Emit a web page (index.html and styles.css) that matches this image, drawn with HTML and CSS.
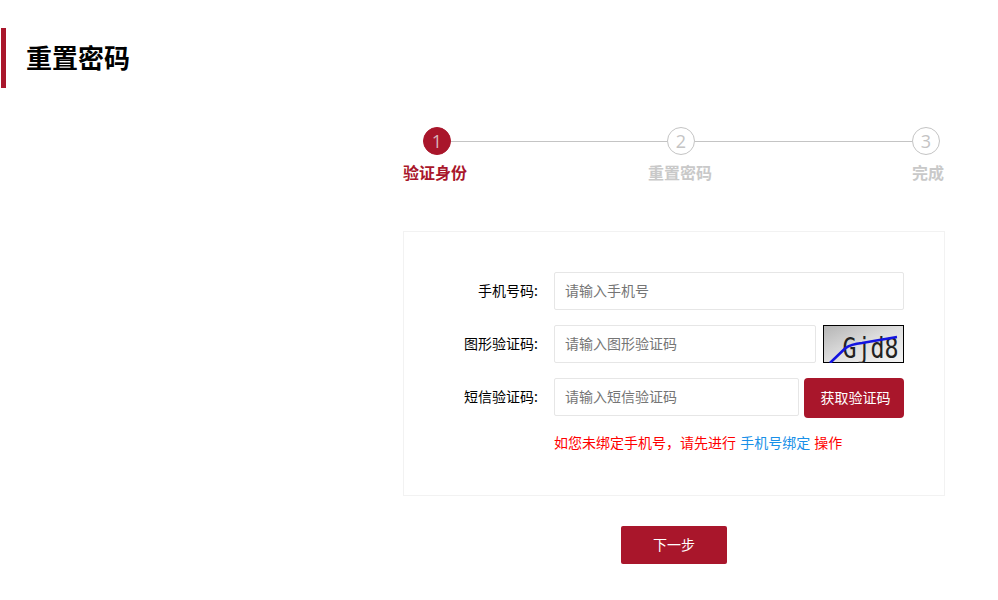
FILE: index.html
```html
<!DOCTYPE html>
<html lang="zh-CN">
<head>
<meta charset="utf-8">
<title>重置密码</title>
<link rel="stylesheet" href="styles.css">
</head>
<body>
<h1 class="page-title">重置密码</h1>
<main class="panel">
  <div class="steps">
    <span class="dot dot-active">1</span>
    <span class="line"></span>
    <span class="dot">2</span>
    <span class="line line-long"></span>
    <span class="dot">3</span>
  </div>
  <div class="step-labels">
    <span class="label-active">验证身份</span>
    <span class="label-mid">重置密码</span>
    <span class="label-end">完成</span>
  </div>
  <form class="card">
    <div class="row">
      <label class="field-label">手机号码:</label>
      <input class="field" placeholder="请输入手机号">
    </div>
    <div class="row">
      <label class="field-label">图形验证码:</label>
      <input class="field" placeholder="请输入图形验证码">
      <svg class="captcha" width="81" height="38" viewBox="0 0 81 38">
        <defs>
          <linearGradient id="cap" x1="0" y1="0" x2="1" y2="1">
            <stop offset="0" stop-color="#b4b4b4"/>
            <stop offset="0.5" stop-color="#dedede"/>
            <stop offset="1" stop-color="#f4f4f4"/>
          </linearGradient>
        </defs>
        <rect x="0.5" y="0.5" width="80" height="37" fill="url(#cap)" stroke="#000"/>
        <text class="captcha-text" x="19.5" y="33" textLength="56" lengthAdjust="spacingAndGlyphs">Gjd8</text>
        <path d="M7 38 L22 23.5 Q28 19 39 18 L74 12" fill="none" stroke="#1414e0" stroke-width="2.6"/>
      </svg>
    </div>
    <div class="row">
      <label class="field-label">短信验证码:</label>
      <input class="field" placeholder="请输入短信验证码">
      <button type="button" class="sms-btn">获取验证码</button>
    </div>
    <p class="hint">如您未绑定手机号，请先进行 <a class="hint-link">手机号绑定</a> 操作</p>
  </form>
  <div class="actions">
    <button type="button" class="next-btn">下一步</button>
  </div>
</main>
</body>
</html>
```
FILE: styles.css
```css
* { box-sizing: border-box; }
html, body { margin: 0; padding: 0; background: #fff; }
body {
  font-family: "Noto Sans CJK SC", "Liberation Sans", sans-serif;
  font-size: 14px;
  color: #000;
  height: 600px;
  overflow: hidden;
}
.page-title {
  margin: 28px 0 0 1px;
  height: 60px;
  border-left: 5px solid #a9162b;
  padding-left: 20px;
  font-size: 26px;
  font-weight: 700;
  line-height: 58px;
}
.panel {
  width: 542px;
  margin: 40px 0 0 403px;
}
.steps {
  display: flex;
  align-items: center;
  margin-top: -1px;
  padding-left: 20px;
}
.dot {
  flex: none;
  width: 28px;
  height: 28px;
  border: 1px solid #c4c4c4;
  border-radius: 50%;
  color: #c4c4c4;
  text-align: center;
  font: 18px/26px "Open Sans", "Liberation Sans", sans-serif;
}
.dot-active {
  background: #a9162b;
  border-color: #a9162b;
  color: #d8b4ba;
}
.line {
  flex: none;
  width: 216px;
  height: 1px;
  background: #c4c4c4;
}
.line-long { width: 217px; }
.step-labels {
  display: flex;
  margin-top: 5px;
  height: 24px;
  font-size: 16px;
  font-weight: 700;
  line-height: 24px;
  color: #c9c9c9;
}
.label-active { color: #a9162b; }
.label-mid { margin-left: 181px; }
.label-end { margin-left: 200px; }
.card {
  margin-top: 47px;
  height: 265px;
  border: 1px solid #f2f2f2;
  padding: 40px 40px 0 0;
}
.row {
  display: flex;
  align-items: flex-start;
  margin-bottom: 15px;
  height: 38px;
}
.field-label {
  flex: none;
  width: 134px;
  text-align: right;
  line-height: 36px;
  font-size: 14px;
  color: #000;
}
.field {
  flex: 1;
  min-width: 0;
  height: 38px;
  margin-left: 16px;
  border: 1px solid #e6e6e6;
  border-radius: 2px;
  padding: 0 9px 2px 10px;
  font: 14px "Noto Sans CJK SC", sans-serif;
  color: #333;
  outline: none;
}
.field::placeholder { color: #757575; opacity: 1; }
.captcha { flex: none; margin-left: 7px; display: block; }
.captcha-text {
  font-family: "DejaVu Sans Mono", monospace;
  font-size: 29px;
  fill: #222;
}
.sms-btn {
  flex: none;
  width: 100px;
  height: 40px;
  margin-left: 5px;
  border: 0;
  border-radius: 4px;
  padding: 0 0 2px 3px;
  background: #a9162b;
  color: #fff;
  font: 14px "Noto Sans CJK SC", sans-serif;
}
.hint {
  margin: 0 0 0 150px;
  padding-top: 1px;
  font-size: 14px;
  line-height: 20px;
  color: #f00;
  white-space: nowrap;
  word-spacing: 1px;
}
.hint-link { color: #1890e8; }
.actions {
  display: flex;
  justify-content: center;
  margin-top: 30px;
}
.next-btn {
  width: 106px;
  height: 38px;
  border: 0;
  border-radius: 2px;
  padding: 0 0 2px;
  background: #a9162b;
  color: #fff;
  font: 14px "Noto Sans CJK SC", sans-serif;
}
```
